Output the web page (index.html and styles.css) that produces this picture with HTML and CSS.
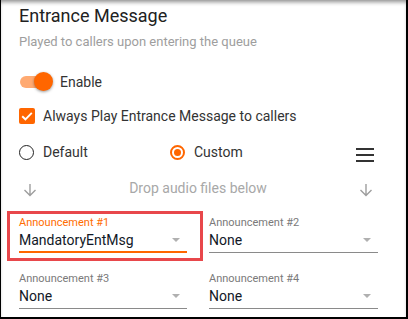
FILE: index.html
```html
<!DOCTYPE html>
<html>
<head>
<meta charset="utf-8">
<link rel="stylesheet" href="styles.css">
</head>
<body>
<div class="frame">
  <h1 class="title">Entrance Message</h1>
  <p class="subtitle">Played to callers upon entering the queue</p>

  <div class="row toggle-row">
    <span class="switch"><span class="track"></span><span class="thumb"></span></span>
    <span class="text">Enable</span>
  </div>

  <div class="row check-row">
    <span class="checkbox">
      <svg width="16" height="16" viewBox="0 0 16 16"><path d="M3.2 8.2 L6.4 11.3 L12.8 4.8" fill="none" stroke="#fff" stroke-width="1.9"/></svg>
    </span>
    <span class="text">Always Play Entrance Message to callers</span>
  </div>

  <div class="row radio-row">
    <div class="radio-group first">
      <span class="radio"></span>
      <span class="text">Default</span>
    </div>
    <div class="radio-group">
      <span class="radio on"><span class="dot"></span></span>
      <span class="text">Custom</span>
    </div>
    <svg class="menu" width="18" height="14" viewBox="0 0 18 14"><rect x="0" y="0" width="18" height="2" fill="#333"/><rect x="0" y="6" width="18" height="2" fill="#333"/><rect x="0" y="12" width="18" height="2" fill="#333"/></svg>
  </div>

  <div class="row drop-row">
    <svg class="arrow" width="14" height="14" viewBox="0 0 14 14"><path d="M7 1 V12.5 M1.5 7 L7 12.5 L12.5 7" fill="none" stroke="#9e9e9e" stroke-width="1.4"/></svg>
    <span class="drop-text">Drop audio files below</span>
    <svg class="arrow" width="14" height="14" viewBox="0 0 14 14"><path d="M7 1 V12.5 M1.5 7 L7 12.5 L12.5 7" fill="none" stroke="#9e9e9e" stroke-width="1.4"/></svg>
  </div>

  <div class="fields">
    <div class="field focused">
      <span class="highlight"></span>
      <div class="field-label">Announcement #1</div>
      <div class="field-value"><span>MandatoryEntMsg</span><span class="caret"></span></div>
    </div>
    <div class="field">
      <div class="field-label">Announcement #2</div>
      <div class="field-value"><span>None</span><span class="caret"></span></div>
    </div>
    <div class="field">
      <div class="field-label">Announcement #3</div>
      <div class="field-value"><span>None</span><span class="caret"></span></div>
    </div>
    <div class="field">
      <div class="field-label">Announcement #4</div>
      <div class="field-value"><span>None</span><span class="caret"></span></div>
    </div>
  </div>
</div>
</body>
</html>
```

FILE: styles.css
```css
* { box-sizing: border-box; }
html, body { margin: 0; padding: 0; background: #fff; }
body { font-family: Roboto, "Liberation Sans", sans-serif; color: #212121; }

.frame {
  width: 408px;
  height: 319px;
  border-left: 1px solid #000;
  border-right: 2px solid #000;
  border-bottom: 2px solid #000;
  box-shadow: inset 0 4px 4px -2px rgba(0,0,0,0.45);
  padding: 4px 30px 0 18px;
  overflow: hidden;
}

.title {
  margin: 0;
  font-size: 18px;
  font-weight: 400;
  line-height: 24px;
  color: #212121;
}
.subtitle {
  margin: 6px 0 0;
  font-size: 13px;
  line-height: 16px;
  color: #9e9e9e;
}

.row { display: flex; align-items: center; }
.text { font-size: 14px; color: #333; line-height: 20px; }

.toggle-row { height: 20px; margin-top: 22px; }
.switch { position: relative; width: 34px; height: 20px; margin-left: 1px; margin-right: 6px; }
.track {
  position: absolute; left: 0; top: 4px;
  width: 28px; height: 12px; border-radius: 6px;
  background: #ffaa72;
}
.thumb {
  position: absolute; left: 14px; top: 0;
  width: 19px; height: 19px; border-radius: 50%;
  background: #ff6600;
  box-shadow: 0 1px 3px rgba(0,0,0,0.4);
}

.check-row { height: 20px; margin-top: 14px; }
.checkbox {
  width: 16px; height: 16px; margin-right: 8px;
  background: #ff6600; border-radius: 2px;
  display: flex;
}

.radio-row { height: 20px; margin-top: 16px; }
.radio-group { display: flex; align-items: center; }
.radio-group.first { width: 151px; }
.radio {
  width: 15px; height: 15px; border-radius: 50%;
  border: 1.5px solid #222; margin-right: 9px;
  display: flex; align-items: center; justify-content: center;
}
.radio.on { border: 2px solid #ff6600; }
.radio .dot { width: 7px; height: 7px; border-radius: 50%; background: #ff6600; }
.menu { margin-left: auto; margin-right: 2px; margin-top: 6px; }

.drop-row { height: 20px; margin-top: 16px; padding: 0 3px 0 4px; }
.arrow { flex: none; margin-top: 3px; }
.drop-text { flex: 1; text-align: center; font-size: 14px; color: #a8a8a8; }

.fields {
  display: grid;
  grid-template-columns: 168px 169px;
  column-gap: 22px;
  row-gap: 19px;
  margin-top: 18px;
}
.field { position: relative; }
.highlight {
  position: absolute; left: -12px; top: -5px; right: -16px; bottom: -8px;
  border: 3px solid #e8474b;
}
.field-label { font-size: 11px; line-height: 13px; color: #7a7a7a; }
.focused .field-label { color: #ff6d00; }
.field-value {
  display: flex; align-items: center; justify-content: space-between;
  font-size: 14px; line-height: 18px; color: #111827;
  margin-top: 2px; padding-bottom: 3px; padding-right: 7px;
  border-bottom: 1px solid #8a8a8a;
}
.focused .field-value { border-bottom: 2px solid #ff6600; padding-bottom: 2px; }
.caret {
  width: 0; height: 0;
  border-left: 4px solid transparent; border-right: 4px solid transparent;
  border-top: 4px solid #b0b0b0;
}
```
